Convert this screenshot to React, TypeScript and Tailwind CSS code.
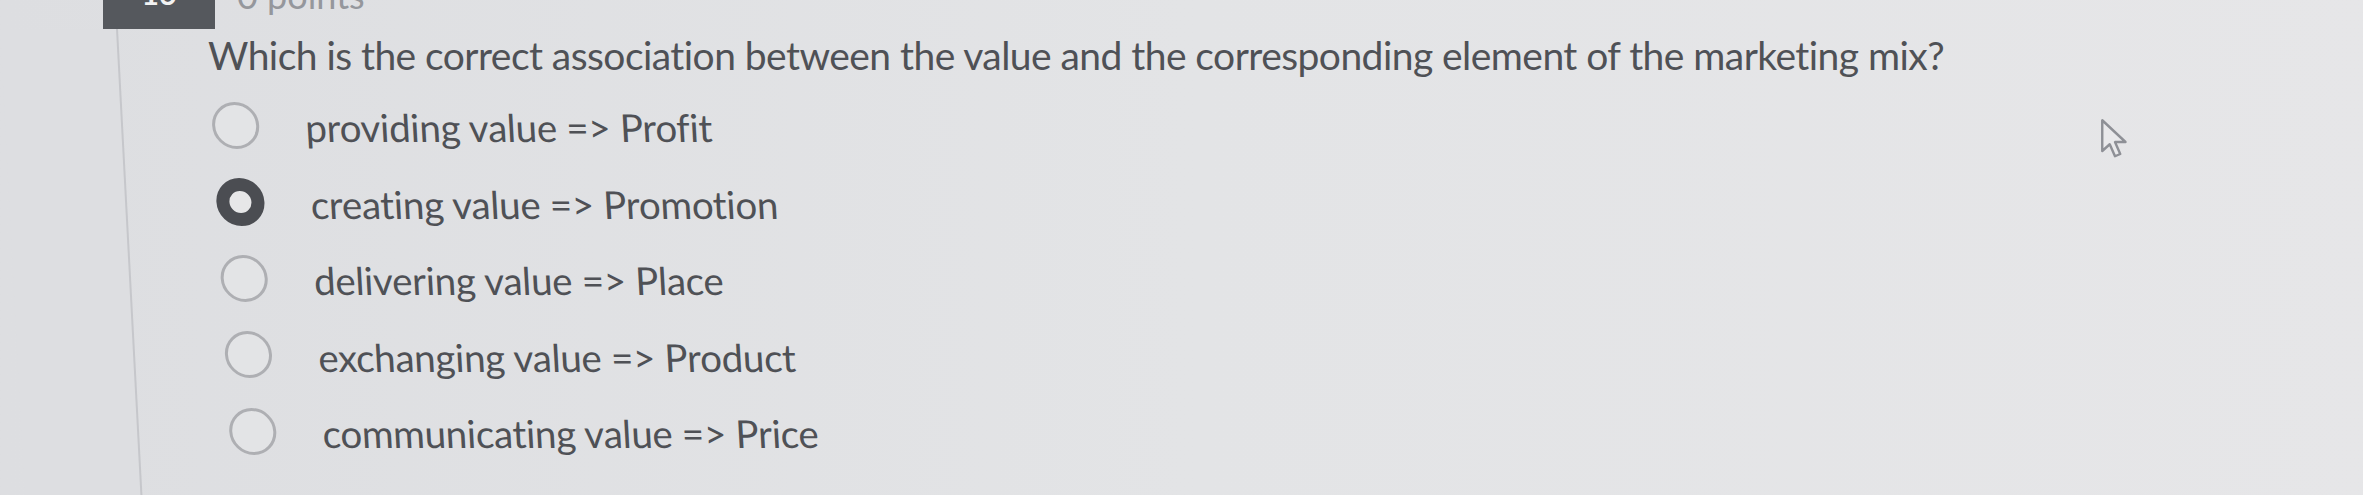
import { useState } from 'react';

const OPTIONS = [
  'providing value => Profit',
  'creating value => Promotion',
  'delivering value => Place',
  'exchanging value => Product',
  'communicating value => Price',
];

function Radio({ checked }: { checked: boolean }) {
  if (checked) {
    return <div className="w-[48px] h-[48px] flex-none rounded-full border-[13px] border-[#4b4d52] bg-[#e7e7e8]" />;
  }
  return <div className="w-[47px] h-[47px] flex-none rounded-full border-[3px] border-[#aeafb3] bg-[#e3e4e6]" />;
}

function Cursor() {
  return (
    <svg className="absolute left-[2100px] top-[118px]" width="30" height="42" viewBox="0 0 20 28">
      <path d="M1.5 1.5 L1.5 22 L6.5 17.5 L10 25.5 L13.5 24 L10 16 L17 16 Z" fill="#e9e9eb" stroke="#8e9096" strokeWidth="1.6" strokeLinejoin="round" />
    </svg>
  );
}

export default function App() {
  const [selected, setSelected] = useState(1);

  return (
    <div className="relative w-[2363px] h-[495px] overflow-hidden bg-gradient-to-r from-[#dddee1] via-[#e3e4e6] to-[#e6e6e8]" style={{ fontFamily: 'Lato, "Open Sans", sans-serif' }}>
      <div className="flex h-[29px] overflow-hidden">
        <div className="w-[103px] flex-none" />
        <div className="w-[112px] flex-none bg-[#55585d] flex justify-center">
          <span className="text-[30px] leading-none font-bold text-[#f2f2f2] -mt-[22px]">16</span>
        </div>
        <span className="ml-[22px] text-[36px] leading-none text-[#95979c] -mt-[23px]">0 points</span>
      </div>

      <div className="flex h-[466px]">
        <div className="w-[118px] flex-none border-r-2 border-[#c6c7cb] skew-x-[3deg] origin-top bg-[#dddee1]" />

        <div className="flex-1 pl-[90px]">
          <h2 className="mt-[3px] text-[39px] leading-[1.2] text-[#4f5156] tracking-[-0.55px]">
            Which is the correct association between the value and the corresponding element of the marketing mix?
          </h2>

          <div className="mt-[8px] skew-x-[3.2deg] origin-top-left">
            {OPTIONS.map((opt, i) => (
              <div key={opt} className="flex items-center h-[76.5px] pl-[2px] cursor-pointer" onClick={() => setSelected(i)}>
                <Radio checked={selected === i} />
                <span className="ml-[46px] pt-[4px] text-[38.5px] leading-[1.2] text-[#4f5156] tracking-[-0.3px]">{opt}</span>
              </div>
            ))}
          </div>
        </div>
      </div>

      <Cursor />
    </div>
  );
}
